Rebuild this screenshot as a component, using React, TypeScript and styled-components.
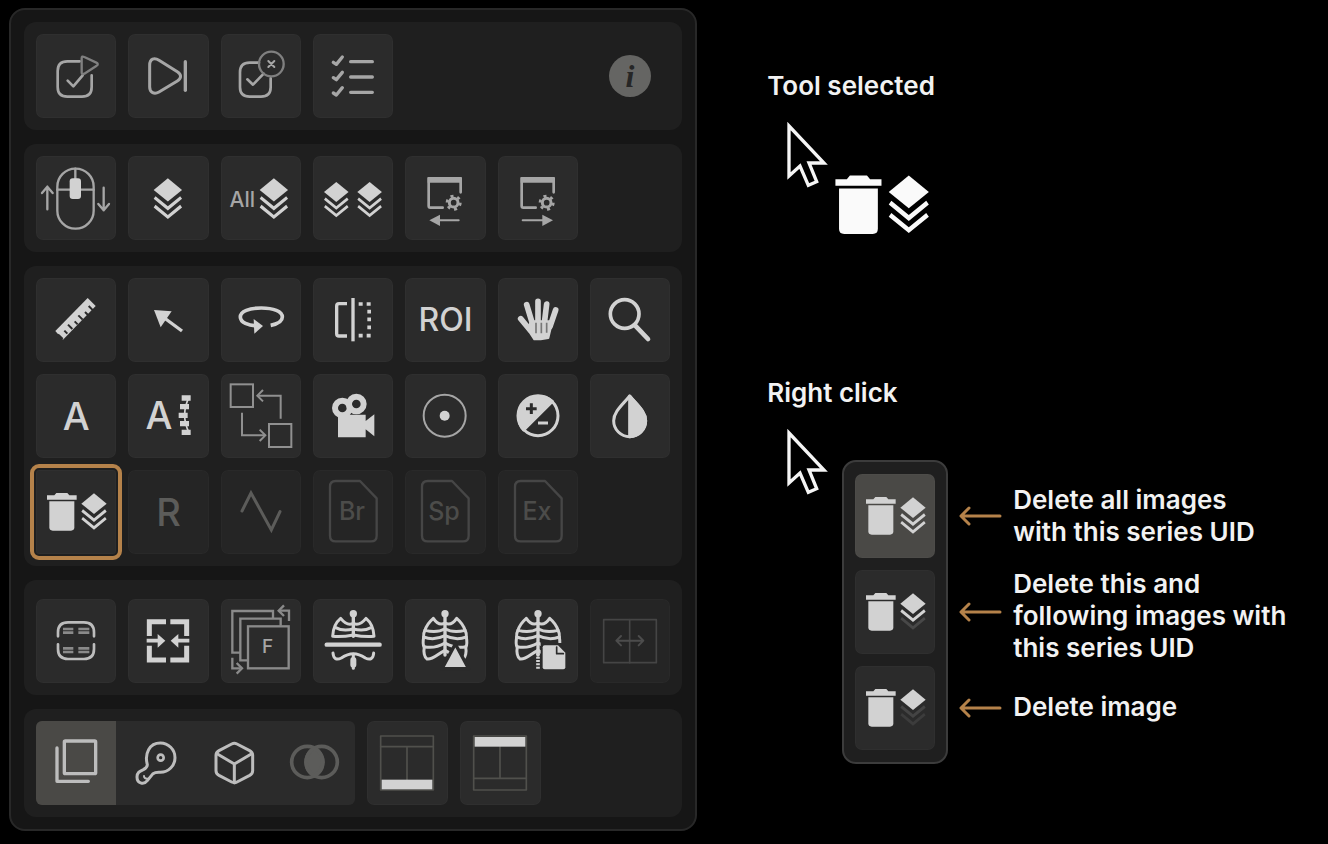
import React from "react";
import styled, { createGlobalStyle, css } from "styled-components";

const color = {
  bright: "#d2d2d2",
  soft: "#a6a6a6",
  line: "#bdbdbd",
  off: "#5c5c5a",
  faint: "#454545",
  tile: "#2b2b2b",
  tileOff: "#252525",
  active: "#4a4946",
  section: "#1f1f1f",
  accent: "#b5824a",
};

const font = 'Inter, "Liberation Sans", sans-serif';

const GlobalStyle = createGlobalStyle`
  *, *::before, *::after { box-sizing: border-box; }
  body { margin: 0; background: #000; font-family: ${font}; color: #f2f2f2; }
  h2, p, ul { margin: 0; padding: 0; }
  ul { list-style: none; }
`;

const Page = styled.main`
  display: grid;
  grid-template-columns: 27fr 22fr;
  align-items: start;
  gap: 70px;
  padding: 8px 0 12px 9px;
`;

const Toolbox = styled.div`
  display: flex;
  flex-direction: column;
  gap: 14px;
  padding: 12px 13px;
  border: 2px solid #282828;
  border-radius: 16px;
  background: #161616;
`;

const Section = styled.section<{ $roomy?: boolean }>`
  padding: ${(p) => (p.$roomy ? "19px" : "12px")} 12px 12px;
  border-radius: 12px;
  background: ${color.section};
`;

const ToolGrid = styled.div`
  display: grid;
  grid-template-columns: repeat(7, minmax(0, 1fr));
  gap: 12px;
`;

const ModeRow = styled.div`
  display: grid;
  grid-template-columns: 320fr 81fr 81fr 118fr;
  gap: 12px;
`;

const Segments = styled.div`
  display: grid;
  grid-template-columns: repeat(4, minmax(0, 1fr));
  overflow: hidden;
  border-radius: 6px;
  background: ${color.tile};
`;

const buttonReset = css`
  display: flex;
  align-items: center;
  justify-content: center;
  min-width: 0;
  height: 84px;
  padding: 0;
  border: 0;
  font-family: ${font};
  color: ${color.bright};
  cursor: pointer;
  &:disabled { cursor: default; color: ${color.off}; }
`;

const Tile = styled.button<{ $selected?: boolean; $active?: boolean }>`
  ${buttonReset}
  border-radius: ${(p) => (p.$selected ? "3px" : "7px")};
  background: ${(p) => (p.$active ? color.active : color.tile)};
  box-shadow: inset 0 0 0 1px rgba(255, 255, 255, 0.02);
  &:disabled { background: ${color.tileOff}; }
  ${(p) =>
    p.$selected &&
    css`
      outline: 4px solid ${color.accent};
      outline-offset: 2px;
    `}
`;

const Segment = styled.button<{ $active?: boolean }>`
  ${buttonReset}
  background: ${(p) => (p.$active ? color.active : "transparent")};
`;

const Letters = styled.span<{ $small?: boolean }>`
  font-size: ${(p) => (p.$small ? "32px" : "38px")};
  font-weight: 500;
  line-height: 40px;
`;

const InfoButton = styled.button`
  ${buttonReset}
  grid-column: 7;
  justify-self: center;
  align-self: center;
  width: 42px;
  height: 42px;
  border-radius: 50%;
  background: #656563;
  color: #262626;
  font: italic bold 32px/42px "Liberation Serif", serif;
`;

const Drawing = styled.svg`
  flex: none;
  display: block;
  fill: none;
`;

const Guide = styled.div`
  display: flex;
  flex-direction: column;
  gap: 143px;
  padding-top: 62px;
`;

const Demo = styled.section`
  display: flex;
  flex-direction: column;
  gap: 19px;
`;

const Title = styled.h2`
  font-size: 26px;
  font-weight: 600;
  line-height: 32px;
`;

const Stage = styled.div<{ $gap: number }>`
  display: flex;
  align-items: flex-start;
  gap: ${(p) => p.$gap}px;
  padding-left: 17px;
`;

const Dragged = styled.div`
  padding-top: 54px;
`;

const MenuArea = styled.div`
  display: flex;
  gap: 11px;
  padding-top: 32px;
`;

const Menu = styled.div`
  flex: none;
  display: grid;
  gap: 12px;
  width: 106px;
  padding: 12px 11px;
  border: 2px solid #3c3c3c;
  border-radius: 14px;
  background: ${color.section};
`;

const Pointers = styled.div`
  display: grid;
  grid-template-rows: repeat(3, 84px);
  align-items: center;
  align-content: start;
  gap: 12px;
  padding-top: 14px;
`;

const Notes = styled.ul`
  display: grid;
  grid-template-rows: 84px 92px 66px;
  align-items: center;
  align-content: start;
  gap: 12px;
  padding-top: 14px;
`;

const Note = styled.li`
  font-size: 26px;
  font-weight: 600;
  line-height: 32px;
  white-space: pre-line;
`;

/* Glyphs are drawn on a 3x grid: an 80x84 tile is 240x252 units. */
type GlyphProps = { at: string; children: React.ReactNode; stroke?: string; weight?: number };
const Glyph = ({ at, children, stroke = color.line, weight = 8 }: GlyphProps) => (
  <Drawing
    width="80"
    height="84"
    viewBox={`${at} 240 252`}
    stroke={stroke}
    strokeWidth={weight}
    strokeLinecap="round"
    strokeLinejoin="round"
    aria-hidden="true"
  >
    {children}
  </Drawing>
);

type GlyphTextProps = { x: number; y: number; size: number; fill: string; weight?: number; children: string };
const GlyphText = ({ x, y, size, fill, weight = 400, children }: GlyphTextProps) => (
  <text x={x} y={y} fontSize={size} fontWeight={weight} fill={fill} stroke="none" textAnchor="middle" fontFamily={font}>
    {children}
  </text>
);

const Layers = ({ x, y, k = 1, lit = 3, fill = color.bright }: { x: number; y: number; k?: number; lit?: number; fill?: string }) => (
  <g transform={`translate(${x} ${y}) scale(${k})`} stroke="none">
    <path d="M38 0 76 31 38 62 0 31Z" fill={fill} />
    <path d="M0 55 5 48 38 75 71 48 76 55 38 86Z" fill={lit > 1 ? fill : "#444"} />
    <path d="M0 78 5 71 38 98 71 71 76 78 38 109Z" fill={lit > 2 ? fill : lit > 1 ? "#484848" : "#3c3c3c"} />
  </g>
);

const Bin = ({ x, y, fill = color.bright }: { x: number; y: number; fill?: string }) => (
  <g transform={`translate(${x} ${y})`} stroke="none" fill={fill}>
    <path d="M0 7h22l6-7h33l6 7h22v13H0Z" />
    <path d="M7 25h75v78q0 10-10 10H17q-10 0-10-10Z" />
  </g>
);

const DeleteGlyph = ({ lit = 3 }: { lit?: number }) => (
  <Glyph at="0 0">
    <Bin x={33} y={69} />
    <Layers x={136} y={70} lit={lit} />
  </Glyph>
);

const WindowShift = ({ back }: { back?: boolean }) => (
  <Glyph at="47 75" stroke={color.soft}>
    <path d="M160 230H123q-5 0-5-5V142h96v42" />
    <path d="M115 147h102" strokeWidth="16" strokeLinecap="butt" />
    <circle cx="193" cy="215" r="13" strokeWidth="9" />
    <circle cx="193" cy="215" r="20" strokeWidth="8" strokeDasharray="9 12" strokeLinecap="butt" />
    {back ? (
      <>
        <path d="M208 268h-65" strokeWidth="6" />
        <path d="m120 268 32-17v34Z" fill={color.soft} stroke="none" />
      </>
    ) : (
      <>
        <path d="M121 268h65" strokeWidth="6" />
        <path d="m212 268-32-17v34Z" fill={color.soft} stroke="none" />
      </>
    )}
  </Glyph>
);

const FileGlyph = ({ text }: { text: string }) => (
  <Glyph at="39 630" stroke="#464646" weight={7}>
    <path d="M107 663H180L230 715V827q0 17-17 17H107q-17 0-17-17V680q0-17 17-17Z" />
    <GlyphText x={156} y={779} size={75} weight={500} fill="#4c4c4a">{text}</GlyphText>
  </Glyph>
);

const RibSide = () => (
  <>
    <path d="M0 144c-13 7-25 1-35-14-14 12-22 25-25 36 16 4 38 8 60-5" />
    <path d="M-60 165c-4 8-5 14-4 21 21 8 45 5 64-4" />
    <path d="M-64 186c-2 12-3 22 1 29 22 5 44 0 63-11" />
    <path d="M-62 215c-3 16 0 32 8 37 18 3 32-16 54-26" />
  </>
);

const RibCage = () => (
  <g transform="translate(437 0)" strokeWidth="9">
    <circle cx="0" cy="116" r="11" fill={color.bright} stroke="none" />
    <path d="M0 120V240" strokeWidth="10" />
    <RibSide />
    <g transform="scale(-1 1)">
      <RibSide />
    </g>
  </g>
);

const LayoutGlyph = ({ top }: { top?: boolean }) => (
  <Glyph at="202 438" stroke="#50504c" weight={5}>
    <rect x="243" y="483" width="158" height="162" />
    <path d={top ? "M243 610h158M322 515v95" : "M243 515h158M322 515v100"} />
    <rect x="246" y={top ? 486 : 614} width="152" height="29" fill={color.bright} stroke="none" />
  </Glyph>
);

const Cursor = () => (
  <Drawing width="45" height="70" viewBox="105 210 135 210" stroke="#f5f5f5" strokeWidth="10" aria-hidden="true">
    <path d="M120 225 225 336H180L203 392 178 403 153 345 120 375Z" />
  </Drawing>
);

const Pointer = () => (
  <Drawing width="43" height="20" viewBox="0 0 43 20" stroke={color.accent} strokeWidth="3" strokeLinecap="round" strokeLinejoin="round" aria-hidden="true">
    <path d="M41 10H3M10 2 2 10l8 8" />
  </Drawing>
);

export default function App() {
  return (
    <>
      <GlobalStyle />
      <Page>
        <Toolbox>
          <Section aria-label="Tasks">
            <ToolGrid>
              <Tile aria-label="Accept and play">
                <Glyph at="106 99" stroke={color.soft}>
                  <path d="M237 181H200q-29 0-29 29v48q0 29 29 29h44q29 0 29-29V223" />
                  <path d="M201 239 218 256 246 223" />
                  <path d="M243 172q0-8 8-4l36 17q8 4 1 9l-37 24q-8 4-8-4Z" stroke="#808080" strokeWidth="7" />
                </Glyph>
              </Tile>
              <Tile aria-label="Next">
                <Glyph at="384 99" stroke={color.soft} weight={9}>
                  <path d="M449 193c0-20 14-24 28-15l55 34c13 8 13 20 0 28l-55 33c-14 8-28 2-28-15Z" />
                  <path d="M556 182v86" strokeWidth="10" />
                </Glyph>
              </Tile>
              <Tile aria-label="Accept and close">
                <Glyph at="661 99" stroke={color.soft}>
                  <path d="M775 185H747q-29 0-29 29v45q0 28 29 28h34q29 0 29-28V232" />
                  <path d="M740 235 757 251 789 218" />
                  <circle cx="812" cy="189" r="37" stroke="#808080" strokeWidth="7" />
                  <path d="m803 180 18 18m0-18-18 18" strokeWidth="6" />
                </Glyph>
              </Tile>
              <Tile aria-label="Task list">
                <Glyph at="939 99" stroke={color.soft} weight={10}>
                  <path d="M1052 182h65M1052 228h65M1052 274h65" />
                  <path d="m1000 184 9 6 18-22m-27 62 9 6 18-22m-27 62 9 6 18-22" />
                </Glyph>
              </Tile>
              <InfoButton aria-label="Information">i</InfoButton>
            </ToolGrid>
          </Section>

          <Section aria-label="Series">
            <ToolGrid>
              <Tile aria-label="Scroll images">
                <Glyph at="106 465" stroke={color.soft} weight={7}>
                  <rect x="170" y="503" width="109" height="180" rx="54" />
                  <path d="M170 566H279M224 503v30" />
                  <rect x="207" y="532" width="34" height="62" rx="9" fill={color.bright} stroke="none" />
                  <path d="M140 625V557m-16 19 16-19 16 19M309 560v68m-16-19 16 19 16-19" />
                </Glyph>
              </Tile>
              <Tile aria-label="Scroll series">
                <Glyph at="384 465"><Layers x={461} y={532} k={1.12} /></Glyph>
              </Tile>
              <Tile aria-label="Scroll all series">
                <Glyph at="661 465">
                  <GlyphText x={725} y={618} size={63} weight={500} fill={color.soft}>All</GlyphText>
                  <Layers x={777} y={532} k={1.12} />
                </Glyph>
              </Tile>
              <Tile aria-label="Scroll linked series">
                <Glyph at="939 465">
                  <Layers x={972} y={543} k={0.97} />
                  <Layers x={1072} y={543} k={0.97} />
                </Glyph>
              </Tile>
              <Tile aria-label="Previous preset"><WindowShift back /></Tile>
              <Tile aria-label="Next preset"><WindowShift /></Tile>
            </ToolGrid>
          </Section>

          <Section aria-label="Tools">
            <ToolGrid>
              <Tile aria-label="Measure">
                <Glyph at="46 54" stroke={color.tile} weight={6}>
                  <path d="M104 213 201 114 225 138 127 239Z" fill={color.bright} stroke="none" />
                  <path d="m217 151-13-13m-2 27-9-9m-7 23-13-13m-2 27-9-9m-7 23-13-13m-2 27-9-9m-5 25-14-14" strokeLinecap="butt" />
                </Glyph>
              </Tile>
              <Tile aria-label="Arrow">
                <Glyph at="324 54" stroke={color.bright} weight={10}>
                  <path d="M425 168 486 213" strokeLinecap="butt" />
                  <path d="M402 150 455 154 422 202Z" fill={color.bright} stroke="none" />
                </Glyph>
              </Tile>
              <Tile aria-label="Rotate">
                <Glyph at="601 54" stroke={color.bright} weight={11}>
                  <path d="M750 196C775 191 785 182 785 171C785 154 758 144 722 144S659 154 659 171C659 187 682 197 712 198" strokeLinecap="butt" />
                  <path d="M699 177 727 198 701 221Z" fill={color.bright} stroke="none" />
                </Glyph>
              </Tile>
              <Tile aria-label="Flip">
                <Glyph at="39 54" stroke={color.bright} weight={10}>
                  <path d="M141 131H117q-7 0-7 7v83q0 7 7 7h24" strokeLinecap="butt" />
                  <path d="M159 114v130" strokeLinecap="butt" />
                  <path d="M176 132h12m12 0h12M202 155h11M202 178h11M202 202h11M176 227h12m12 0h12" strokeWidth="11" strokeLinecap="butt" />
                </Glyph>
              </Tile>
              <Tile><Letters $small>ROI</Letters></Tile>
              <Tile aria-label="Pan">
                <Glyph at="594 54" stroke={color.bright} weight={17}>
                  <path d="M680 134 697 190M714 124V190M740 132 733 190M767 150 750 200M662 176 690 210" />
                  <path d="M694 184H757L745 234 722 238H703L682 206Z" fill={color.bright} strokeWidth="6" />
                  <path d="M708 188v32M724 188v32M740 188v30" stroke="#777" strokeWidth="5" strokeLinecap="butt" />
                </Glyph>
              </Tile>
              <Tile aria-label="Zoom">
                <Glyph at="872 54" stroke={color.bright} weight={11}>
                  <circle cx="976" cy="162" r="43" />
                  <path d="M1007 196 1046 237" strokeWidth="14" />
                </Glyph>
              </Tile>

              <Tile><Letters>A</Letters></Tile>
              <Tile aria-label="Annotation with scale">
                <Glyph at="324 342" stroke={color.bright}>
                  <GlyphText x={417} y={507} size={114} weight={500} fill={color.bright}>A</GlyphText>
                  <path d="M485 414h27M480 440h27M476 466h27M480 491h27M485 517h27" strokeWidth="16" strokeLinecap="butt" />
                  <path d="M508 410C490 445 490 485 508 520" strokeWidth="5" />
                </Glyph>
              </Tile>
              <Tile aria-label="Swap viewports">
                <Glyph at="601 342" stroke="#909090" weight={6}>
                  <g strokeLinejoin="miter" strokeLinecap="butt">
                    <rect x="630" y="373" width="67" height="68" />
                    <rect x="745" y="492" width="67" height="69" />
                    <path d="M780 476V407H714M664 458v68h66" />
                    <path d="m727 390-17 17 17 17M717 509l17 17-17 17" />
                  </g>
                </Glyph>
              </Tile>
              <Tile aria-label="Cine">
                <Glyph at="39 342" stroke={color.bright} weight={18}>
                  <circle cx="127" cy="444" r="22" />
                  <circle cx="169" cy="432" r="22" />
                  <path d="M114 464H197V483L223 463V529L197 508V532H114Z" fill={color.bright} stroke="none" />
                </Glyph>
              </Tile>
              <Tile aria-label="Localizer">
                <Glyph at="317 342" stroke={color.soft} weight={6}>
                  <circle cx="436" cy="467" r="63" />
                  <circle cx="436" cy="467" r="15" fill={color.bright} stroke="none" />
                </Glyph>
              </Tile>
              <Tile aria-label="Window level">
                <Glyph at="594 342" stroke={color.bright} weight={9}>
                  <circle cx="714" cy="467" r="60" />
                  <path d="M671 510A61 61 0 0 1 757 424Z" fill={color.bright} />
                  <path d="M678 446h32M694 430v32" stroke={color.tile} strokeLinecap="butt" />
                  <path d="M714 489h30" strokeLinecap="butt" />
                </Glyph>
              </Tile>
              <Tile aria-label="Invert">
                <Glyph at="872 342" stroke={color.bright} weight={9}>
                  <path d="M991 408C970 434 943 455 943 482a48 48 0 0 0 96 0C1039 455 1012 434 991 408Z" />
                  <path d="M991 408C1012 434 1039 455 1039 482a48 48 0 0 1-48 48Z" fill={color.bright} />
                </Glyph>
              </Tile>

              <Tile $selected aria-label="Delete series"><DeleteGlyph /></Tile>
              <Tile disabled><Letters>R</Letters></Tile>
              <Tile disabled aria-label="Signal">
                <Glyph at="601 630" stroke={color.off} weight={9}>
                  <path d="M664 753 691 699 752 810 778 755" strokeLinejoin="miter" />
                </Glyph>
              </Tile>
              <Tile disabled aria-label="Brain"><FileGlyph text="Br" /></Tile>
              <Tile disabled aria-label="Spine"><FileGlyph text="Sp" /></Tile>
              <Tile disabled aria-label="Extremity"><FileGlyph text="Ex" /></Tile>
            </ToolGrid>
          </Section>

          <Section $roomy aria-label="Views">
            <ToolGrid>
              <Tile aria-label="Overlay text">
                <Glyph at="46 72">
                  <path d="M112 184V172q0-30 30-30h48q30 0 30 30v12M112 208v14q0 30 30 30h48q30 0 30-30V208" />
                  <path d="M127 162h31m15 0h33M127 173h31m15 0h33M127 220h31m15 0h33M127 231h31m15 0h33" stroke="#8a8a8a" strokeLinecap="butt" />
                </Glyph>
              </Tile>
              <Tile aria-label="Fit to window">
                <Glyph at="324 72" stroke={color.bright} weight={15}>
                  <g strokeLinecap="butt" strokeLinejoin="miter">
                    <path d="M438 140H388V183M451 140H500V183M388 212V255H438M500 212V255H451" />
                    <path d="M380 197h38M508 197H470" strokeWidth="11" />
                  </g>
                  <path d="m413 177 23 20-23 21ZM475 177l-23 20 23 21Z" fill={color.bright} stroke="none" />
                </Glyph>
              </Tile>
              <Tile aria-label="Flip stack">
                <Glyph at="601 72" stroke="#8a8a8a" weight={7}>
                  <g strokeLinecap="butt" strokeLinejoin="miter">
                    <rect x="682" y="154" width="122" height="126" />
                    <path d="M780 152V131H659V256H680M757 129V108H635V233H657" />
                    <path d="M805 138V107H778M635 248V280H658" />
                    <path d="m790 91-16 16 16 16M648 264l16 16-16 16" />
                  </g>
                  <GlyphText x={741} y={234} size={57} weight={500} fill={color.soft}>F</GlyphText>
                </Glyph>
              </Tile>
              <Tile aria-label="Chest section">
                <Glyph at="39 72" stroke={color.bright} weight={9}>
                  <circle cx="160" cy="116" r="11" fill={color.bright} stroke="none" />
                  <path d="M160 120v64" strokeWidth="10" />
                  <path d="M160 145C147 152 135 146 122 130C107 142 99 160 98 184C120 186 140 184 160 180M107 158C125 168 145 166 160 162" />
                  <path d="M160 145C173 152 185 146 198 130C213 142 221 160 222 184C200 186 180 184 160 180M213 158C195 168 175 166 160 162" />
                  <path d="M80 209H239" strokeWidth="13" />
                  <path d="M99 234C100 252 110 256 124 249C140 238 150 236 160 236S180 238 196 249C210 256 220 252 221 234" />
                  <path d="M160 238v42" strokeWidth="9" />
                  <path d="M160 255v14" strokeWidth="18" />
                </Glyph>
              </Tile>
              <Tile aria-label="Chest marker">
                <Glyph at="317 72" stroke={color.bright}>
                  <RibCage />
                  <path d="M468 207 508 281H428Z" fill={color.bright} stroke={color.tile} strokeWidth="10" />
                </Glyph>
              </Tile>
              <Tile aria-label="Chest report">
                <Glyph at="317 72" stroke={color.bright}>
                  <RibCage />
                  <path d="M437 235v46" strokeWidth="11" strokeDasharray="6 4" strokeLinecap="butt" />
                  <path d="M445 204h65v80h-65Z" fill={color.tile} stroke="none" />
                  <path d="M457 211h40l22 22v44q0 6-6 6h-56q-6 0-6-6v-60q0-6 6-6Z" fill={color.bright} stroke="none" />
                  <path d="M493 216v20h20" stroke={color.tile} strokeWidth="5" />
                </Glyph>
              </Tile>
              <Tile disabled aria-label="Split view">
                <Glyph at="872 72" stroke={color.faint} weight={5}>
                  <rect x="913" y="134" width="158" height="129" />
                  <path d="M991 134v129" />
                  <path d="M953 197h76M965 183l-14 14 14 14M1018 183l14 14-14 14" stroke="#4c4c4c" strokeWidth="6" />
                </Glyph>
              </Tile>
            </ToolGrid>
          </Section>

          <Section aria-label="Layout">
            <ModeRow>
              <Segments>
                <Segment $active aria-label="Stack">
                  <Glyph at="46 438" weight={10}>
                    <rect x="131" y="498" width="94" height="98" rx="3" />
                    <path d="M109 519V619H203" />
                  </Glyph>
                </Segment>
                <Segment aria-label="Key images">
                  <Glyph at="286 438" weight={9}>
                    <path d="M380 569C371 536 386 504 419 504a44 44 0 0 1 0 88C411 592 404 591 397 596L380 617C368 632 349 624 349 606C349 592 357 589 368 584C375 580 380 577 380 569Z" />
                    <path d="M370 603q0 9 12 8" strokeWidth="6" />
                    <circle cx="420" cy="548" r="9" strokeWidth="8" />
                  </Glyph>
                </Segment>
                <Segment aria-label="3D">
                  <Glyph at="526 438" weight={9}>
                    <path d="M636 507q8-4 16 0l38 20q9 5 9 14v46q0 9-9 14l-38 20q-8 4-16 0l-38-20q-9-5-9-14v-46q0-9 9-14Z" />
                    <path d="m592 536 52 31 52-31M644 567v56" />
                  </Glyph>
                </Segment>
                <Segment disabled aria-label="Fusion">
                  <Glyph at="766 438" stroke={color.off} weight={11}>
                    <circle cx="863" cy="561" r="47" />
                    <circle cx="906" cy="561" r="47" />
                    <path d="M884 519C917 540 917 582 884 603C851 582 851 540 884 519Z" fill={color.off} />
                  </Glyph>
                </Segment>
              </Segments>
              <Tile aria-label="Bottom bar"><LayoutGlyph /></Tile>
              <Tile aria-label="Top bar"><LayoutGlyph top /></Tile>
            </ModeRow>
          </Section>
        </Toolbox>

        <Guide>
          <Demo>
            <Title>Tool selected</Title>
            <Stage $gap={6}>
              <Cursor />
              <Dragged>
                <Drawing width="94" height="59" viewBox="33 68 180 114" aria-hidden="true">
                  <Bin x={33} y={69} fill="#fafafa" />
                  <Layers x={136} y={69} k={1.02} fill="#fafafa" />
                </Drawing>
              </Dragged>
            </Stage>
          </Demo>
          <Demo>
            <Title>Right click</Title>
            <Stage $gap={13}>
              <Cursor />
              <MenuArea>
                <Menu>
                  <Tile $active aria-label="Delete all images with this series UID"><DeleteGlyph /></Tile>
                  <Tile aria-label="Delete this and following images"><DeleteGlyph lit={2} /></Tile>
                  <Tile aria-label="Delete image"><DeleteGlyph lit={1} /></Tile>
                </Menu>
                <Pointers>
                  <Pointer />
                  <Pointer />
                  <Pointer />
                </Pointers>
                <Notes>
                  <Note>{"Delete all images\nwith this series UID"}</Note>
                  <Note>{"Delete this and\nfollowing images with\nthis series UID"}</Note>
                  <Note>Delete image</Note>
                </Notes>
              </MenuArea>
            </Stage>
          </Demo>
        </Guide>
      </Page>
    </>
  );
}
